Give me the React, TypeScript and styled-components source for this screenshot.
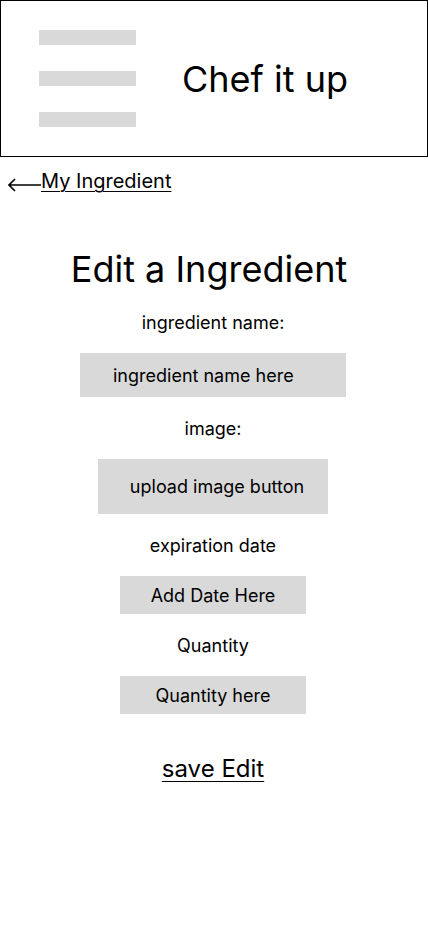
import React from 'react'
import styled, { createGlobalStyle } from 'styled-components';

const GlobalStyle = createGlobalStyle`
    body {
        margin: 0;
        background: #fff;
        font-family: Inter, "Noto Sans", sans-serif;
        color: #000;
    }
`;

const fields = [
    { label: 'ingredient name:', text: 'ingredient name here', width: 266, height: 44, align: 'left', shift: 0 },
    { label: 'image:', text: 'upload image button', width: 230, height: 55, align: 'center', shift: 8 },
    { label: 'expiration date', text: 'Add Date Here', width: 186, height: 38, align: 'center', shift: 0 },
    { label: 'Quantity', text: 'Quantity here', width: 186, height: 38, align: 'center', shift: 0 },
];

const App = () => {
    return (
        <Page>
            <GlobalStyle />
            <Header>
                <Menu>
                    <Bar />
                    <Bar />
                    <Bar />
                </Menu>
                <Brand>Chef it up</Brand>
            </Header>
            <BackLink>
                <svg width="33" height="14" viewBox="0 0 33 14">
                    <path d="M1 7 H33 M7 1 L1 7 L7 13" stroke="#000" strokeWidth="1.6" fill="none" />
                </svg>
                <span>My Ingredient</span>
            </BackLink>
            <Form>
                <Title>Edit a Ingredient</Title>
                {fields.map((f) => (
                    <Field key={f.label}>
                        <Label>{f.label}</Label>
                        <InputBox $w={f.width} $h={f.height} $align={f.align} $shift={f.shift}>
                            {f.text}
                        </InputBox>
                    </Field>
                ))}
                <Save>save Edit</Save>
            </Form>
        </Page>
    )
}

const Page = styled.div`
    width: 428px;
    min-height: 926px;
`;

const Header = styled.header`
    box-sizing: border-box;
    height: 157px;
    border: 1px solid #000;
    display: flex;
    align-items: center;
    padding-left: 38px;
`;

const Menu = styled.div`
    display: flex;
    flex-direction: column;
    gap: 26px;
    margin-top: -1px;
`;

const Bar = styled.div`
    width: 97px;
    height: 15px;
    background: #d9d9d9;
`;

const Brand = styled.div`
    margin-left: 46px;
    font-size: 36px;
`;

const BackLink = styled.div`
    display: flex;
    align-items: center;
    padding-left: 8px;
    margin-top: 12px;
    font-size: 20px;
    svg {
        margin-top: 8px;
    }
    span {
        text-decoration: underline;
        text-underline-offset: 3px;
        text-decoration-thickness: 1px;
    }
`;

const Form = styled.div`
    display: flex;
    flex-direction: column;
    align-items: center;
    padding-right: 2px;
`;

const Title = styled.h1`
    margin: 54px 8px 0 0;
    font-size: 36px;
    font-weight: 400;
    line-height: 44px;
`;

const Field = styled.div`
    display: flex;
    flex-direction: column;
    align-items: center;
`;

const Label = styled.div`
    font-size: 18px;
    line-height: 22px;
    margin: 21px 0 19px;
`;

const InputBox = styled.div<{ $w: number; $h: number; $align: string; $shift: number }>`
    box-sizing: border-box;
    width: ${(p) => p.$w}px;
    height: ${(p) => p.$h}px;
    background: #d9d9d9;
    display: flex;
    align-items: center;
    justify-content: ${(p) => (p.$align === 'left' ? 'flex-start' : 'center')};
    padding-left: ${(p) => (p.$align === 'left' ? 33 : p.$shift)}px;
    font-size: 18px;
`;

const Save = styled.div`
    margin-top: 40px;
    font-size: 24px;
    text-decoration: underline;
    text-underline-offset: 4px;
    text-decoration-thickness: 1px;
`;

export default App;
